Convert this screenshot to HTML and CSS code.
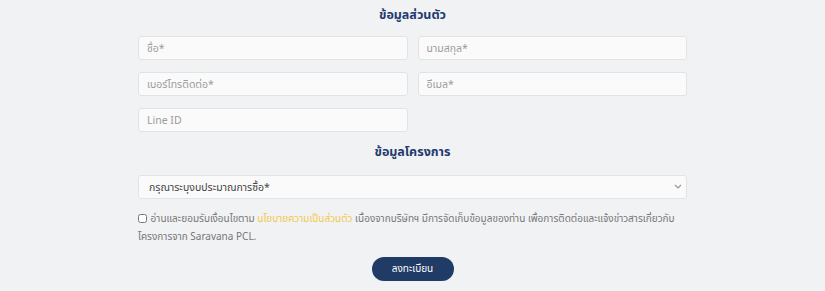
FILE: index.html
```html
<!DOCTYPE html>
<html lang="th">
<head>
    <meta charset="UTF-8">
    <meta name="viewport" content="width=device-width, initial-scale=1.0">
    <title>ลงทะเบียน</title>
    <link rel="stylesheet" href="styles.css">
</head>
<body>

    <!-- ฟอร์มลงทะเบียน -->
    <form class="register">
        <h2 class="section-title">ข้อมูลส่วนตัว</h2>
        <div class="grid">
            <input type="text" class="field" placeholder="ชื่อ*">
            <input type="text" class="field" placeholder="นามสกุล*">
            <input type="text" class="field" placeholder="เบอร์โทรติดต่อ*">
            <input type="text" class="field" placeholder="อีเมล*">
            <input type="text" class="field" placeholder="Line ID">
        </div>

        <h2 class="section-title">ข้อมูลโครงการ</h2>
        <div class="select-wrap">
            <select class="field select">
                <option>กรุณาระบุงบประมาณการซื้อ*</option>
            </select>
            <svg class="arrow" width="8" height="5" viewBox="0 0 8 5"><path d="M1 1l3 3 3-3" fill="none" stroke="#999" stroke-width="1.2"/></svg>
        </div>

        <label class="consent">
            <input type="checkbox" class="check">
            อ่านและยอมรับเงื่อนไขตาม <a href="#" class="policy">นโยบายความเป็นส่วนตัว</a> เนื่องจากบริษัทฯ มีการจัดเก็บข้อมูลของท่าน เพื่อการติดต่อและแจ้งข่าวสารเกี่ยวกับโครงการจาก Saravana PCL.
        </label>

        <div class="actions">
            <button type="button" class="submit">ลงทะเบียน</button>
        </div>
    </form>

</body>
</html>
```

FILE: styles.css
```css
body {
    margin: 0;
    background: #f1f2f4;
    font-family: "Noto Sans", "Noto Sans Thai", "Liberation Sans", sans-serif;
    color: #6b6b6b;
}
.register {
    width: 549px;
    margin: 0 auto;
    padding-top: 4px;
}
.section-title {
    margin: 0;
    text-align: center;
    color: #1f3a6e;
    font-size: 12.5px;
    font-weight: bold;
    line-height: 22px;
}
.grid {
    display: grid;
    grid-template-columns: 1fr 1fr;
    column-gap: 10px;
    row-gap: 12px;
    margin: 10px 0 9px;
}
.field {
    box-sizing: border-box;
    height: 24px;
    width: 100%;
    padding: 0 8px;
    border: 1px solid #e3e3e3;
    border-radius: 3px;
    background: #fafafa;
    font-family: inherit;
    font-size: 10.5px;
    color: #555;
    outline: none;
}
.field::placeholder {
    color: #9c9c9c;
}
.select-wrap {
    position: relative;
    margin: 11px 0 10px;
}
.select {
    appearance: none;
    -webkit-appearance: none;
    padding-left: 10px;
    color: #444;
}
.arrow {
    position: absolute;
    right: 5px;
    top: 10px;
    pointer-events: none;
}
.consent {
    display: block;
    font-size: 10px;
    line-height: 18px;
    color: #777;
}
.check {
    margin: 0 1px 0 0;
    width: 9px;
    height: 9px;
    vertical-align: -1px;
}
.policy {
    color: #f2c94c;
    text-decoration: none;
}
.actions {
    display: flex;
    justify-content: center;
    margin-top: 12px;
}
.submit {
    width: 82px;
    height: 24px;
    border: none;
    border-radius: 12px;
    background: #1f3b66;
    color: #fff;
    font-family: inherit;
    font-size: 10px;
    cursor: pointer;
}
```
